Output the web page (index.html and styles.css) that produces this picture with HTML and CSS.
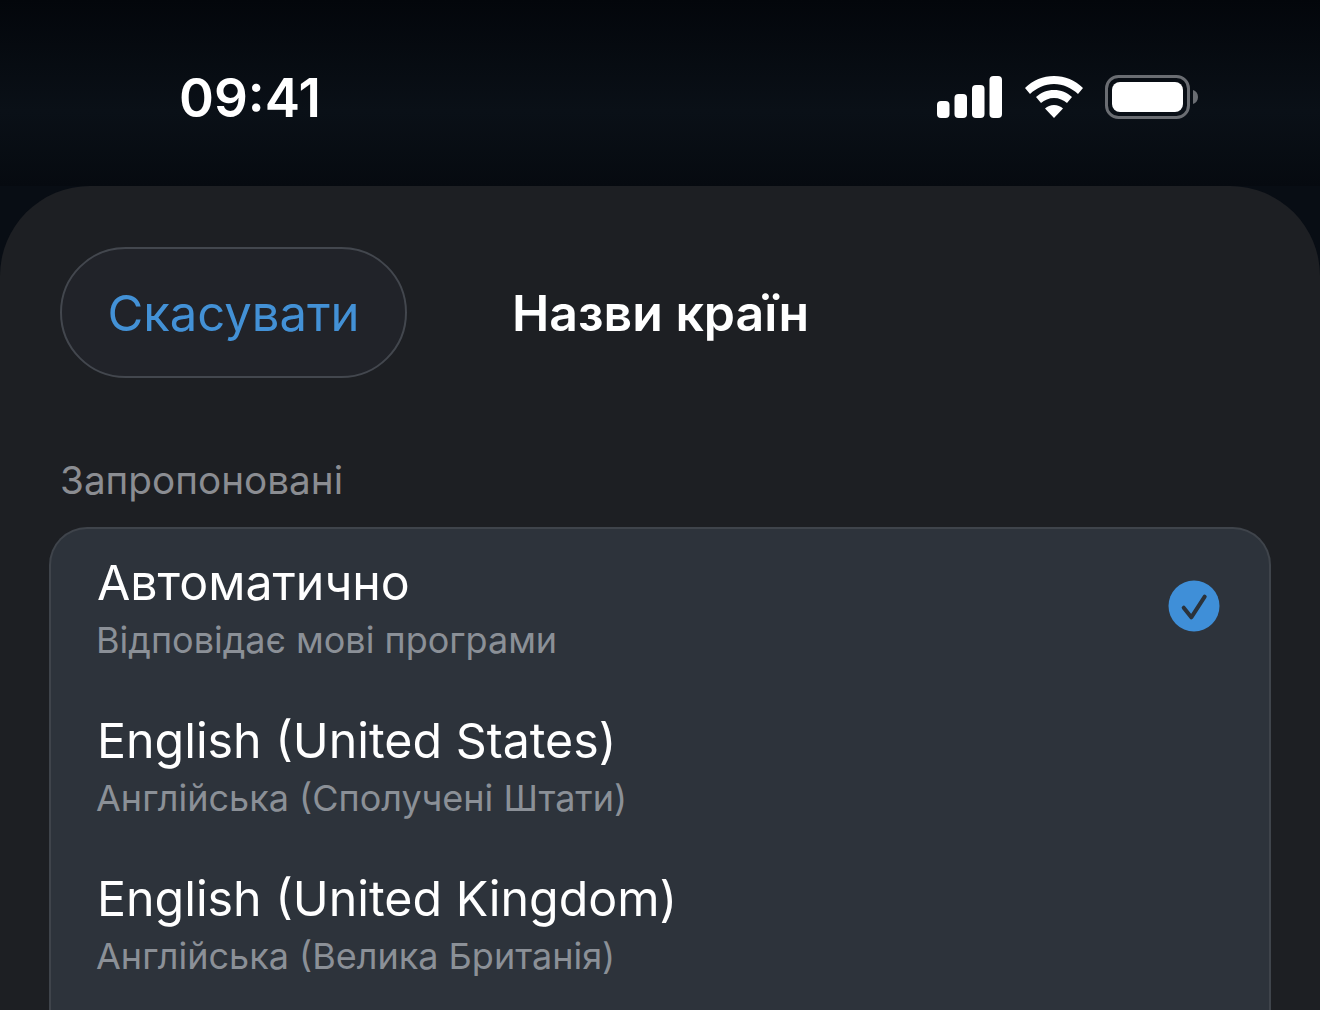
FILE: index.html
```html
<!DOCTYPE html>
<html lang="uk">
<head>
  <meta charset="UTF-8">
  <meta name="viewport" content="width=device-width, initial-scale=1.0">
  <title>Назви країн</title>
  <link rel="stylesheet" href="styles.css">
</head>
<body>
  <div class="status-bar">
    <span class="time">09:41</span>
    <div class="status-icons">
      <svg class="signal" width="65" height="42" viewBox="0 0 65 42">
        <rect x="0" y="25" width="12.500" height="17" rx="4"/>
        <rect x="17.500" y="18" width="12.500" height="24" rx="4"/>
        <rect x="35" y="9" width="12.500" height="33" rx="4"/>
        <rect x="52.500" y="0" width="12.500" height="42" rx="4"/>
      </svg>
      <svg class="wifi" width="58" height="42" viewBox="0 0 58 42">
        <path d="M29 0C18 0 8 4 0 12l5 6c6.500-6 15-10 24-10s17.500 4 24 10l5-6C50 4 40 0 29 0z"/>
        <path d="M29 14c-7 0-13 2.500-18 7l5 6c3.500-3 8-5 13-5s9.500 2 13 5l5-6c-5-4.500-11-7-18-7z"/>
        <path d="M29 29c-3.500 0-6.500 1.200-9 3.500L29 42l9-9.500c-2.500-2.300-5.500-3.500-9-3.500z"/>
      </svg>
      <svg class="battery" width="94" height="44" viewBox="0 0 94 44">
        <rect x="1.500" y="1.500" width="82" height="41" rx="12" fill="none" stroke="#6a6d72" stroke-width="3"/>
        <rect x="7" y="7" width="71" height="30" rx="8" fill="#fff"/>
        <path d="M88 15c3 1 5 3.500 5 7s-2 6-5 7z" fill="#6a6d72"/>
      </svg>
    </div>
  </div>

  <div class="sheet">
    <div class="sheet-header">
      <button class="cancel-button">Скасувати</button>
      <h1 class="sheet-title">Назви країн</h1>
    </div>

    <div class="section-label">Запропоновані</div>

    <div class="lang-list">
      <div class="lang-row">
        <div>
          <div class="lang-name">Автоматично</div>
          <div class="lang-sub">Відповідає мові програми</div>
        </div>
        <svg class="check" width="52" height="52" viewBox="0 0 52 52">
          <circle cx="26" cy="26" r="25.500" fill="#3f8fd8"/>
          <path d="M15.700 27.700l7.600 9.600L36.700 16.700" fill="none" stroke="#2b323a" stroke-width="4" stroke-linecap="round" stroke-linejoin="round"/>
        </svg>
      </div>
      <div class="lang-row">
        <div>
          <div class="lang-name">English (United States)</div>
          <div class="lang-sub">Англійська (Сполучені Штати)</div>
        </div>
      </div>
      <div class="lang-row">
        <div>
          <div class="lang-name">English (United Kingdom)</div>
          <div class="lang-sub">Англійська (Велика Британія)</div>
        </div>
      </div>
    </div>
  </div>
</body>
</html>
```

FILE: styles.css
```css
body {
  margin: 0;
  height: 1010px;
  overflow: hidden;
  background-color: #080d14;
  color: #fff;
  font-family: Inter, "Noto Sans", sans-serif;
}

.status-bar {
  height: 186px;
  box-sizing: border-box;
  padding: 0 121px 0 179px;
  display: flex;
  align-items: center;
  justify-content: space-between;
  background: linear-gradient(#03060b, #0a1017 60%, #060a10);
}
.time {
  font-size: 53px;
  font-weight: 600;
  line-height: 60px;
  margin-top: 10px;
}
.status-icons {
  display: flex;
  align-items: center;
  gap: 22px;
  margin-top: 8px;
}
.status-icons svg {
  display: block;
  fill: #fff;
}
.status-icons .signal {
  margin-right: 1px;
}

.sheet {
  height: 824px;
  box-sizing: border-box;
  padding: 61px 49px 0;
  background-color: #1d1f23;
  border-radius: 90px 90px 0 0;
}
.sheet-header {
  display: flex;
  align-items: center;
  gap: 105px;
  padding-left: 11px;
}
.cancel-button {
  width: 347px;
  height: 131px;
  box-sizing: border-box;
  padding: 2px 0 0;
  background-color: #212329;
  border: 2px solid #43474e;
  border-radius: 66px;
  color: #4391d6;
  font-family: inherit;
  font-size: 49px;
}
.sheet-title {
  margin: 0;
  font-size: 50px;
  font-weight: 600;
}

.section-label {
  margin: 79px 0 0 11px;
  font-size: 38.700px;
  line-height: 46px;
  color: #8b8d92;
}

.lang-list {
  margin-top: 24px;
  height: 483px;
  box-sizing: border-box;
  padding: 0 49px 0 46px;
  background-color: #2d333b;
  border: 2px solid #3f444b;
  border-bottom: none;
  border-radius: 38px 38px 0 0;
}
.lang-row {
  height: 158px;
  box-sizing: border-box;
  padding-bottom: 1px;
  display: flex;
  align-items: center;
  justify-content: space-between;
}
.lang-name {
  font-size: 48.300px;
  line-height: 60px;
}
.lang-sub {
  margin: 5px 0 0 -1px;
  font-size: 36px;
  line-height: 44px;
  color: #8b9097;
}
.check {
  margin-bottom: 4px;
}
```
